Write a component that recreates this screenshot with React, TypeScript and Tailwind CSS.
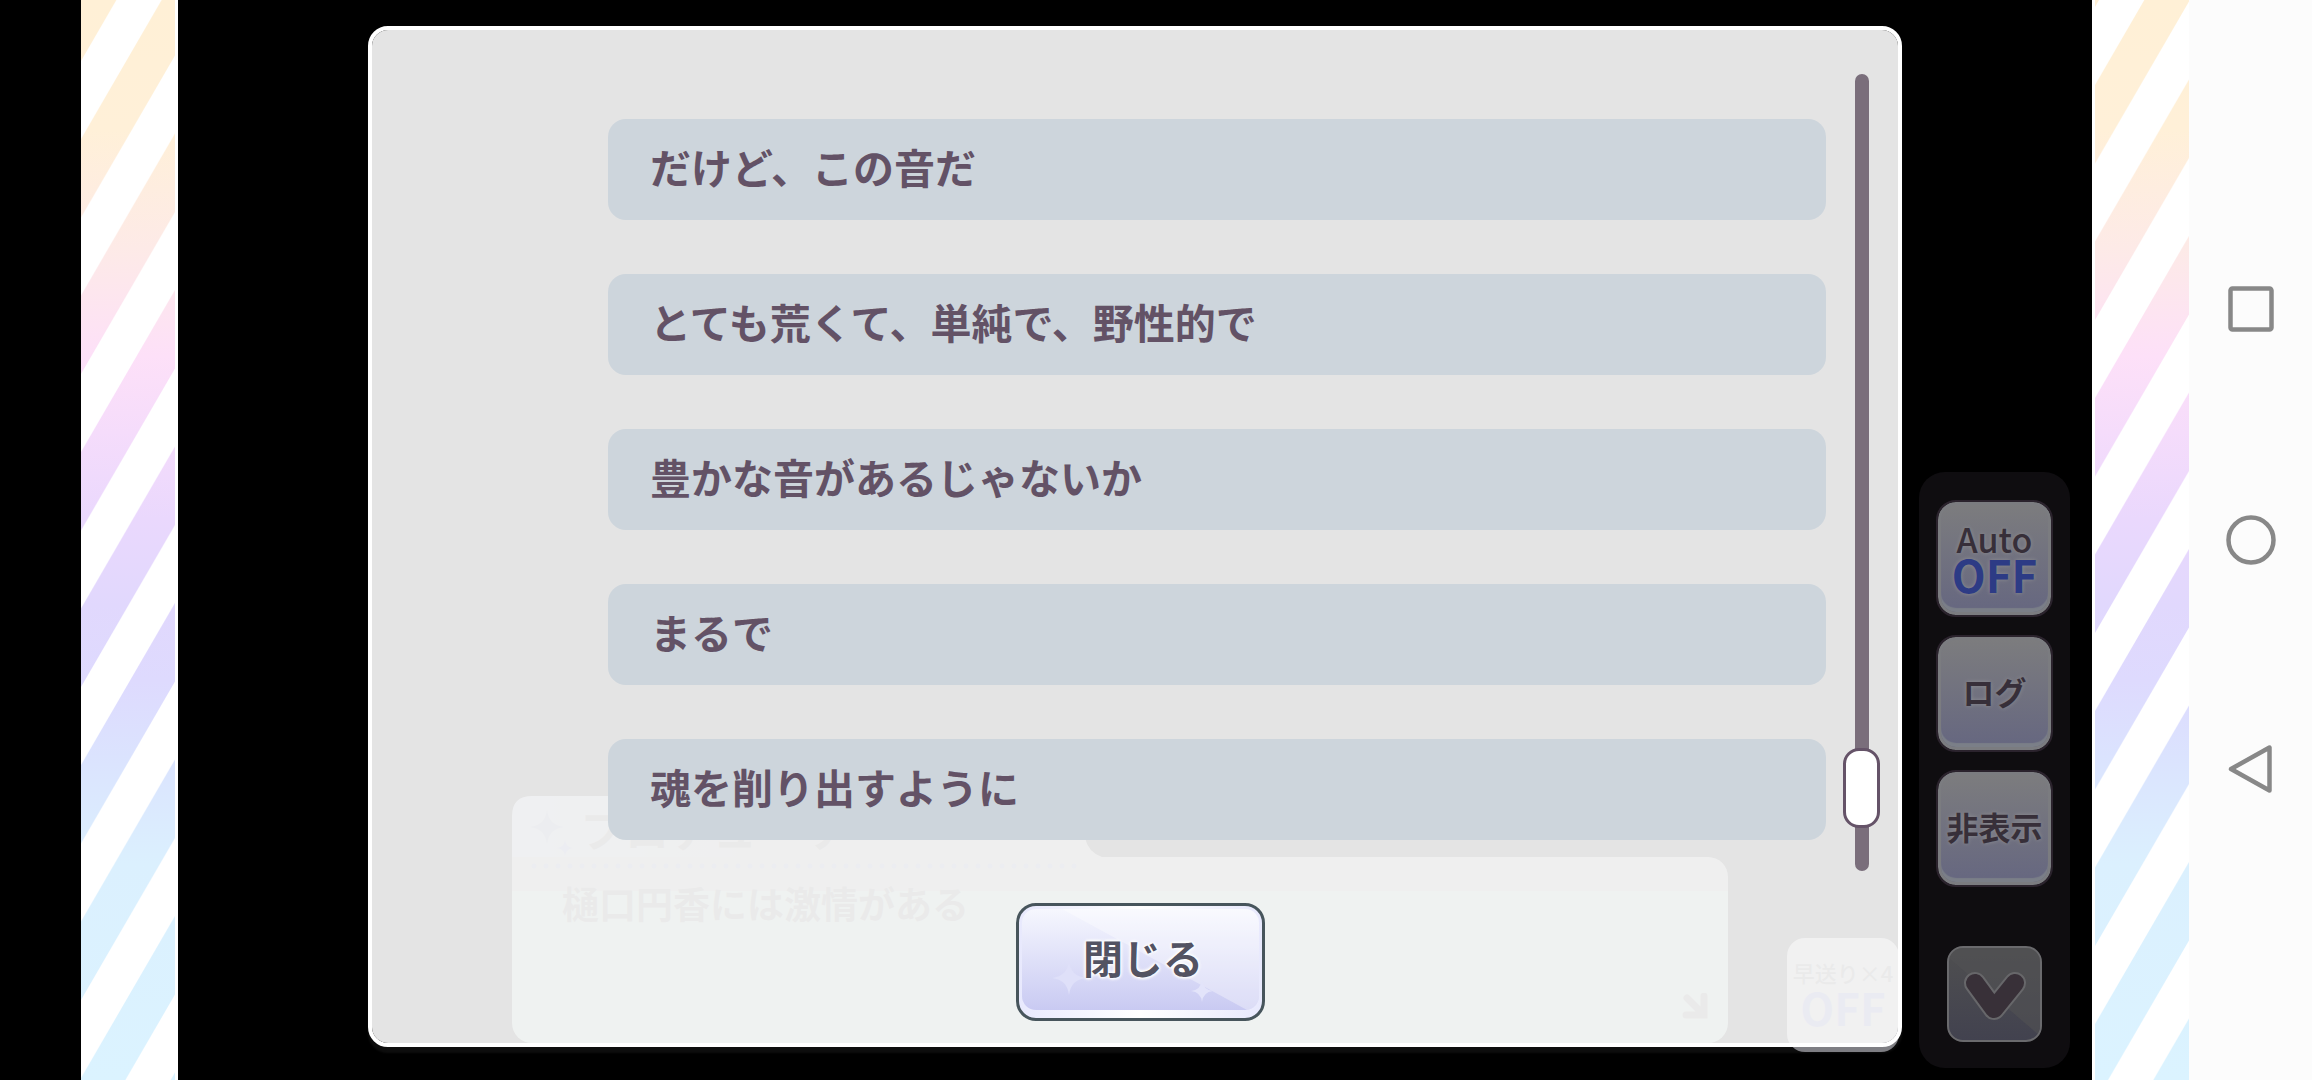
import { useState } from "react";
import clsx from "clsx";

const lines = [
  "だけど、この音だ",
  "とても荒くて、単純で、野性的で",
  "豊かな音があるじゃないか",
  "まるで",
  "魂を削り出すように",
];

const stripes = [0, 1, 2, 3];

function StripeBar({ id, offset, className }: { id: string; offset: number; className: string }) {
  return (
    <div className={clsx("box-content w-[94px] shrink-0 border-white bg-white", className)}>
      <svg aria-hidden="true" className="block h-full w-full">
        <defs>
          <linearGradient id={`${id}-rainbow`} x1="0" y1="0" x2="0" y2="1">
            <stop offset="0" stopColor="#fff0d6" />
            <stop offset="0.12" stopColor="#fff0d8" />
            <stop offset="0.23" stopColor="#fdeae7" />
            <stop offset="0.33" stopColor="#fde0f8" />
            <stop offset="0.4" stopColor="#f5dcfb" />
            <stop offset="0.48" stopColor="#ead8fd" />
            <stop offset="0.56" stopColor="#e1d8fd" />
            <stop offset="0.63" stopColor="#dedafe" />
            <stop offset="0.7" stopColor="#dbe3fe" />
            <stop offset="0.8" stopColor="#dbf0fe" />
            <stop offset="1" stopColor="#dbf3ff" />
          </linearGradient>
          <pattern id={`${id}-lines`} width="94" height="156.5" y={offset} patternUnits="userSpaceOnUse">
            {stripes.map((n) => (
              <path key={n} d="M0 0 94 -162V-84L0 78Z" transform={`translate(0 ${(n - 1) * 156.5})`} fill="#fff" />
            ))}
          </pattern>
        </defs>
        <rect width="100%" height="100%" fill={`url(#${id}-rainbow)`} />
        <rect width="100%" height="100%" fill={`url(#${id}-lines)`} />
      </svg>
    </div>
  );
}

function Sparkle({ className }: { className: string }) {
  return (
    <svg aria-hidden="true" viewBox="0 0 40 40" className={className}>
      <path d="M20 0Q22 18 40 20Q22 22 20 40Q18 22 0 20Q18 18 20 0Z" fill="currentColor" />
    </svg>
  );
}

const sideButton =
  "flex h-[113px] w-[113px] flex-col items-center justify-center whitespace-nowrap rounded-[18px] border-[3px] border-[#7b7c80] outline-2 outline-[#2b232d] bg-linear-to-b from-[#7c7c7e] to-[#666780] pb-[6px] font-bold text-[#372f39] shadow-[inset_0_-4px_1px_#7b7f88] [text-shadow:0_0_4px_#8f8f92]";

function SideMenu() {
  const [auto, setAuto] = useState(false);

  return (
    <aside className="flex w-[151px] shrink-0 flex-col items-center rounded-[26px] bg-[#0f0d10] pt-[30px] pb-[26px]">
      <div className="flex flex-col gap-[22px]">
        <button type="button" onClick={() => setAuto(!auto)} className={sideButton}>
          <span className="text-[34px] leading-[36px] font-medium">Auto</span>
          <span className="text-[44px] leading-[34px] text-[#2d3b85]">{auto ? "ON" : "OFF"}</span>
        </button>
        <button type="button" className={clsx(sideButton, "text-[32px]")}>
          ログ
        </button>
        <button type="button" className={clsx(sideButton, "text-[32px]")}>
          非表示
        </button>
      </div>
      <button
        type="button"
        aria-label="メニューを閉じる"
        className="mt-auto h-[96px] w-[95px] overflow-hidden rounded-[16px] border-2 border-[#6a6a6d] bg-linear-to-b from-[#4f4f50] to-[#42424f]"
      >
        <svg aria-hidden="true" viewBox="0 0 91 92" className="h-full w-full">
          <path d="M0 10 91 88V0H0Z" fill="#525253" opacity="0.6" />
          <path d="M26 35 45 61 66 35" fill="none" stroke="#67676a" strokeWidth="22" strokeLinecap="round" strokeLinejoin="round" />
          <path d="M26 35 45 61 66 35" fill="none" stroke="#383038" strokeWidth="18" strokeLinecap="round" strokeLinejoin="round" />
        </svg>
      </button>
    </aside>
  );
}

// The scene that shows through the translucent log window
function SceneBehind() {
  return (
    <div aria-hidden="true" className="absolute inset-0">
      <div className="absolute right-[174px] bottom-1 left-[144px]">
        <div className="h-[61px] w-[590px] bg-linear-to-r from-[#6a7284] to-[#6c6c6c] to-40% pt-[6px] pl-[69px] text-[44px] leading-[52px] font-bold whitespace-nowrap text-[#3c3c3c] [clip-path:path('M0_61V20Q0_0_20_0H573V42Q576_56_590_61Z')]">
          プロデューサー
        </div>
        <div className="h-[186px] rounded-tr-[20px] rounded-b-[20px] bg-linear-to-b from-[#6c6c6c] from-[34px] to-[#6c8478] to-[34px] pt-[26px] pl-[50px] text-[37px] leading-[40px] font-bold text-[#3c3c3c]">
          樋口円香には激情がある
        </div>
        <Sparkle className="absolute top-[12px] left-[18px] h-[38px] w-[34px] text-[#4c5670]" />
        <Sparkle className="absolute top-[44px] left-[45px] h-[16px] w-[16px] text-[#4c5680]" />
        <div className="absolute top-[67px] left-[16px] h-[6px] w-[550px] bg-[radial-gradient(circle,#4c5478_2px,transparent_3px)] bg-size-[12px_6px]" />
        <svg viewBox="0 0 26 26" className="absolute right-[20px] bottom-[24px] h-[26px] w-[26px]">
          <path d="M5 5 20 20M22 3V22H4" fill="none" stroke="#3f3f3f" strokeWidth="7" strokeLinecap="round" />
        </svg>
      </div>
      <div className="absolute right-[3px] -bottom-[5px] flex h-[114px] w-[112px] flex-col items-center justify-center rounded-[18px] bg-[#78787d] pb-[8px] font-bold whitespace-nowrap text-[#383838]">
        <span className="text-[22px] leading-[32px] font-medium">早送り×4</span>
        <span className="text-[44px] leading-[38px] text-[#3c4684]">OFF</span>
      </div>
    </div>
  );
}

function LogWindow() {
  const [position, setPosition] = useState(94);

  return (
    <div className="relative ml-[190px] flex min-w-0 flex-1">
      <SceneBehind />
      <section
        aria-label="ログ"
        className="relative flex flex-1 flex-col rounded-[20px] border-4 border-white bg-[#ffffffe4] bg-clip-padding pt-[44px] pr-[18px] pb-[22px] shadow-[0_6px_2px_#ffffff0d]"
      >
        <div className="flex flex-1 gap-[17px] pl-[236px]">
          <ul className="flex flex-1 flex-col gap-[54px] pt-[45px]">
            {lines.map((line) => (
              <li
                key={line}
                className="flex h-[101px] items-center rounded-[18px] bg-[#cdd5dc] pb-[8px] pl-[42px] text-[41px] leading-[48px] font-bold text-[#635266]"
              >
                {line}
              </li>
            ))}
          </ul>
          <input
            type="range"
            aria-label="ログのスクロール位置"
            min={0}
            max={100}
            value={position}
            onChange={(e) => setPosition(Number(e.target.value))}
            className="h-[797px] w-[37px] appearance-none bg-transparent [writing-mode:vertical-lr] [&::-webkit-slider-runnable-track]:w-[14px] [&::-webkit-slider-runnable-track]:rounded-full [&::-webkit-slider-runnable-track]:bg-[#7a6e7b] [&::-webkit-slider-thumb]:-ml-[12px] [&::-webkit-slider-thumb]:h-[80px] [&::-webkit-slider-thumb]:w-[37px] [&::-webkit-slider-thumb]:appearance-none [&::-webkit-slider-thumb]:rounded-[16px] [&::-webkit-slider-thumb]:border-[3px] [&::-webkit-slider-thumb]:border-[#655368] [&::-webkit-slider-thumb]:bg-white"
          />
        </div>
        <div className="mt-[32px] flex justify-center pl-[28px]">
          <button
            type="button"
            className="relative h-[118px] w-[249px] rounded-[20px] border-[3px] border-[#47555c] bg-linear-to-r from-[#e8e9fd] via-white to-[#e8e9fd] px-[3px] pt-[3px] pb-[8px]"
          >
            <span className="relative flex h-full items-center justify-center overflow-hidden rounded-[14px] bg-linear-to-b from-[#f6f7fe] to-[#c9caf2] pb-[6px] pl-[6px] text-[40px] leading-[48px] font-bold text-[#535362]">
              <svg aria-hidden="true" viewBox="0 0 237 101" preserveAspectRatio="none" className="absolute inset-0 h-full w-full">
                <path d="M40 0 225 101H237V0Z" fill="#fff" opacity="0.35" />
              </svg>
              <Sparkle className="absolute bottom-[14px] left-[30px] h-[36px] w-[34px] text-[#dfe0f9]" />
              <Sparkle className="absolute right-[46px] bottom-[8px] h-[22px] w-[22px] text-[#e3e4fa]" />
              <span className="relative [text-shadow:0_0_3px_#fff,0_0_3px_#fff,0_0_4px_#fff,0_0_4px_#fff]">閉じる</span>
            </span>
          </button>
        </div>
      </section>
    </div>
  );
}

function NavBar() {
  const icon = "h-[54px] w-[54px] fill-none stroke-[#888]";

  return (
    <nav className="flex w-[123px] shrink-0 flex-col items-center justify-center gap-[176px] bg-[#fcfcfc]">
      <button type="button" aria-label="履歴">
        <svg aria-hidden="true" viewBox="0 0 54 54" className={icon}>
          <rect x="6.5" y="5.5" width="41" height="41" rx="2" strokeWidth="4.5" />
        </svg>
      </button>
      <button type="button" aria-label="ホーム">
        <svg aria-hidden="true" viewBox="0 0 54 54" className={icon}>
          <circle cx="27" cy="27" r="22.5" strokeWidth="4.5" />
        </svg>
      </button>
      <button type="button" aria-label="戻る">
        <svg aria-hidden="true" viewBox="0 0 54 54" className={icon}>
          <path d="M7 26 45.5 4.5V47.5Z" strokeWidth="4.5" strokeLinejoin="round" />
        </svg>
      </button>
    </nav>
  );
}

export default function App() {
  return (
    <div className="flex min-h-screen bg-black pl-[81px] font-['Noto_Sans_CJK_JP',sans-serif]">
      <StripeBar id="left" offset={61} className="border-r-[3px]" />
      <main className="flex min-w-0 flex-1 gap-[17px] pr-[22px]">
        <div className="flex min-w-0 flex-1 pt-[26px] pb-[33px]">
          <LogWindow />
        </div>
        <div className="flex pt-[472px] pb-[12px]">
          <SideMenu />
        </div>
      </main>
      <StripeBar id="right" offset={7} className="border-l-[3px]" />
      <NavBar />
    </div>
  );
}
